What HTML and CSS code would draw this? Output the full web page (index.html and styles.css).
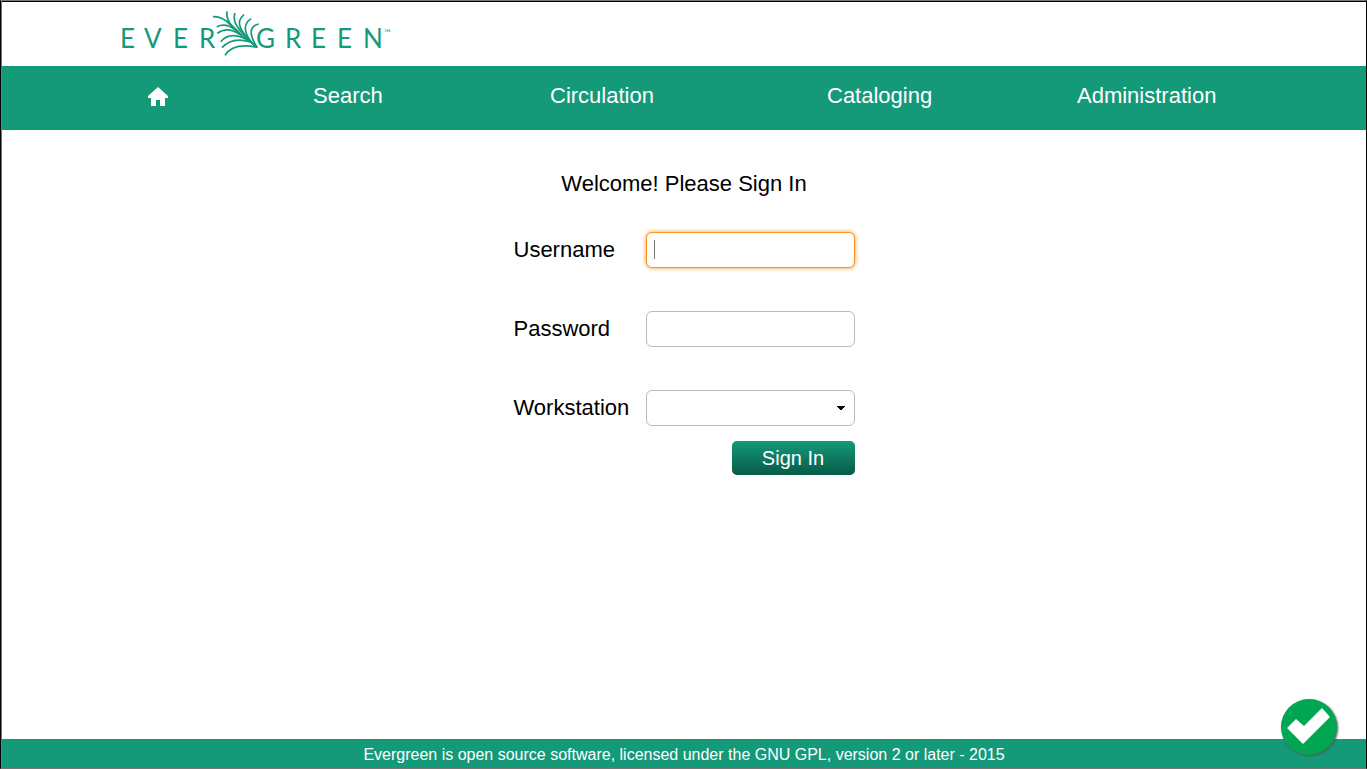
FILE: index.html
```html
<!DOCTYPE html>
<html lang="en">
<head>
<meta charset="utf-8">
<meta name="viewport" content="width=device-width, initial-scale=1">
<title>Evergreen – Sign In</title>
<link rel="stylesheet" href="styles.css">
</head>
<body>
<div class="page">
  <header class="header">
    <a class="logo-link" href="#" aria-label="Evergreen home">
      <svg class="logo" width="272" height="50" viewBox="0 0 272 50" aria-hidden="true">
        <g class="logo-text">
          <text y="40" x="-1 23 52 78">EVER</text>
          <text y="40" x="135 164 190 216 242">GREEN</text>
        </g>
        <text class="logo-tm" x="263" y="28">™</text>
        <g class="logo-leaf" transform="translate(84 -3) scale(.3333)">
          <path d="M24 35Q54 34 76 60Q96 84 120 100Q142 114 157 127"/>
          <path d="M66 19Q62 44 84 65Q100 78 114 95"/>
          <path d="M90 24C80 52 102 72 128 104"/>
          <path d="M117 29C86 54 112 82 142 115"/>
          <path d="M138 41C108 62 122 94 150 124"/>
          <path d="M161 57C126 66 138 98 156 127"/>
          <path d="M35 65Q63 53 90 74"/>
          <path d="M37 85Q68 62 108 91"/>
          <path d="M47 110Q74 78 122 102"/>
          <path d="M51 128Q82 94 136 111"/>
          <path d="M60 151Q84 112 157 127"/>
        </g>
      </svg>
    </a>
  </header>
  <nav class="nav" aria-label="Main">
    <a href="#" aria-label="Home">
      <svg class="home-icon" width="20" height="19" viewBox="0 0 20 19" aria-hidden="true"><path d="M10 0L20 9V11H17V19H12V13H8V19H3V11H0V9Z"/></svg>
    </a>
    <a href="#">Search</a>
    <a href="#">Circulation</a>
    <a href="#">Cataloging</a>
    <a href="#">Administration</a>
  </nav>
  <main class="main">
    <h1 class="title">Welcome! Please Sign In</h1>
    <form class="form">
      <div class="fields">
        <label for="username">Username</label>
        <input class="field field-active" id="username" type="text">
        <label for="password">Password</label>
        <input class="field" id="password" type="password">
        <label for="workstation">Workstation</label>
        <select class="field field-select" id="workstation"><option value="" label=" "></option></select>
      </div>
      <button class="submit" type="button">Sign In</button>
    </form>
  </main>
  <footer class="footer">Evergreen is open source software, licensed under the GNU GPL, version 2 or later - 2015</footer>
  <svg class="status" width="60" height="60" viewBox="0 0 60 60" role="img" aria-label="Connected">
    <circle class="status-disc" cx="29" cy="29" r="28"/>
    <path class="status-check" d="M7 30L16 21L24 28L42 10L50 19L23 46Z"/>
  </svg>
</div>
</body>
</html>
```
FILE: styles.css
```css
* {
  box-sizing: border-box;
}

body {
  margin: 0;
  background: #fff;
  color: #000;
  font: 22px/26px "Liberation Sans", Arial, sans-serif;
}

.page {
  position: relative;
  display: flex;
  flex-direction: column;
  min-height: 100vh;
  padding: 1px 0 0 1px;
  border: 1px solid #000;
  border-top-color: #777;
  border-bottom-color: #777;
  box-shadow: inset 1px 0 #777, inset 0 1px #000;
}

.header {
  padding: 6px 119px 8px;
}

.logo-link,
.logo {
  display: block;
}

.logo-link {
  width: 272px;
}

.logo-text {
  fill: #149979;
  font: 26px Lato, sans-serif;
}

.logo-tm {
  fill: #149979;
  font: 9px Lato, sans-serif;
}

.logo-leaf {
  fill: none;
  stroke: #149979;
  stroke-width: 5;
}

.nav {
  display: grid;
  grid-template-columns: 165fr 237fr 277fr 250fr 142fr;
  align-items: center;
  height: 64px;
  padding: 0 147px 4px 146px;
  background: #149979;
}

.nav a {
  color: #fff;
  text-decoration: none;
}

.home-icon {
  display: block;
  fill: #fff;
}

.main {
  flex: 1;
  padding: 41px 16px;
}

.title {
  margin: 0 0 35px;
  font-size: 22px;
  font-weight: 400;
  text-align: center;
}

.form {
  display: flex;
  flex-direction: column;
  gap: 15px;
  width: fit-content;
  margin: 0 auto;
}

.fields {
  display: grid;
  grid-template-columns: 132px 209px;
  row-gap: 43px;
  align-items: center;
}

.field {
  width: 100%;
  height: 36px;
  padding: 0 8px;
  border: 1px solid #bbb;
  border-radius: 6px;
  background: #fff;
  font: inherit;
  outline: 0;
}

.field-active {
  border-color: #f7931e;
  background: linear-gradient(#777, #777) 7px 7px / 1px 19px no-repeat #fff;
  box-shadow: 0 0 4px #f7931e;
}

.field-select {
  appearance: none;
  background: conic-gradient(from -45deg at 50% 100%, #000 90deg, transparent 0) right 9px center / 8px 4px no-repeat;
}

.submit {
  align-self: flex-end;
  width: 123px;
  height: 34px;
  border: 0;
  border-radius: 5px;
  background: linear-gradient(#149979, #075b47);
  color: #fff;
  font: 20px/24px "Liberation Sans", Arial, sans-serif;
}

.footer {
  padding: 6px 16px 3px;
  background: #149979;
  color: #fff;
  font-size: 16px;
  line-height: 20px;
  text-align: center;
}

.status {
  position: absolute;
  right: 26px;
  bottom: 10px;
  filter: drop-shadow(1px 1px 1px #555);
}

.status-disc {
  fill: #00a651;
}

.status-check {
  fill: #fff;
}
```
